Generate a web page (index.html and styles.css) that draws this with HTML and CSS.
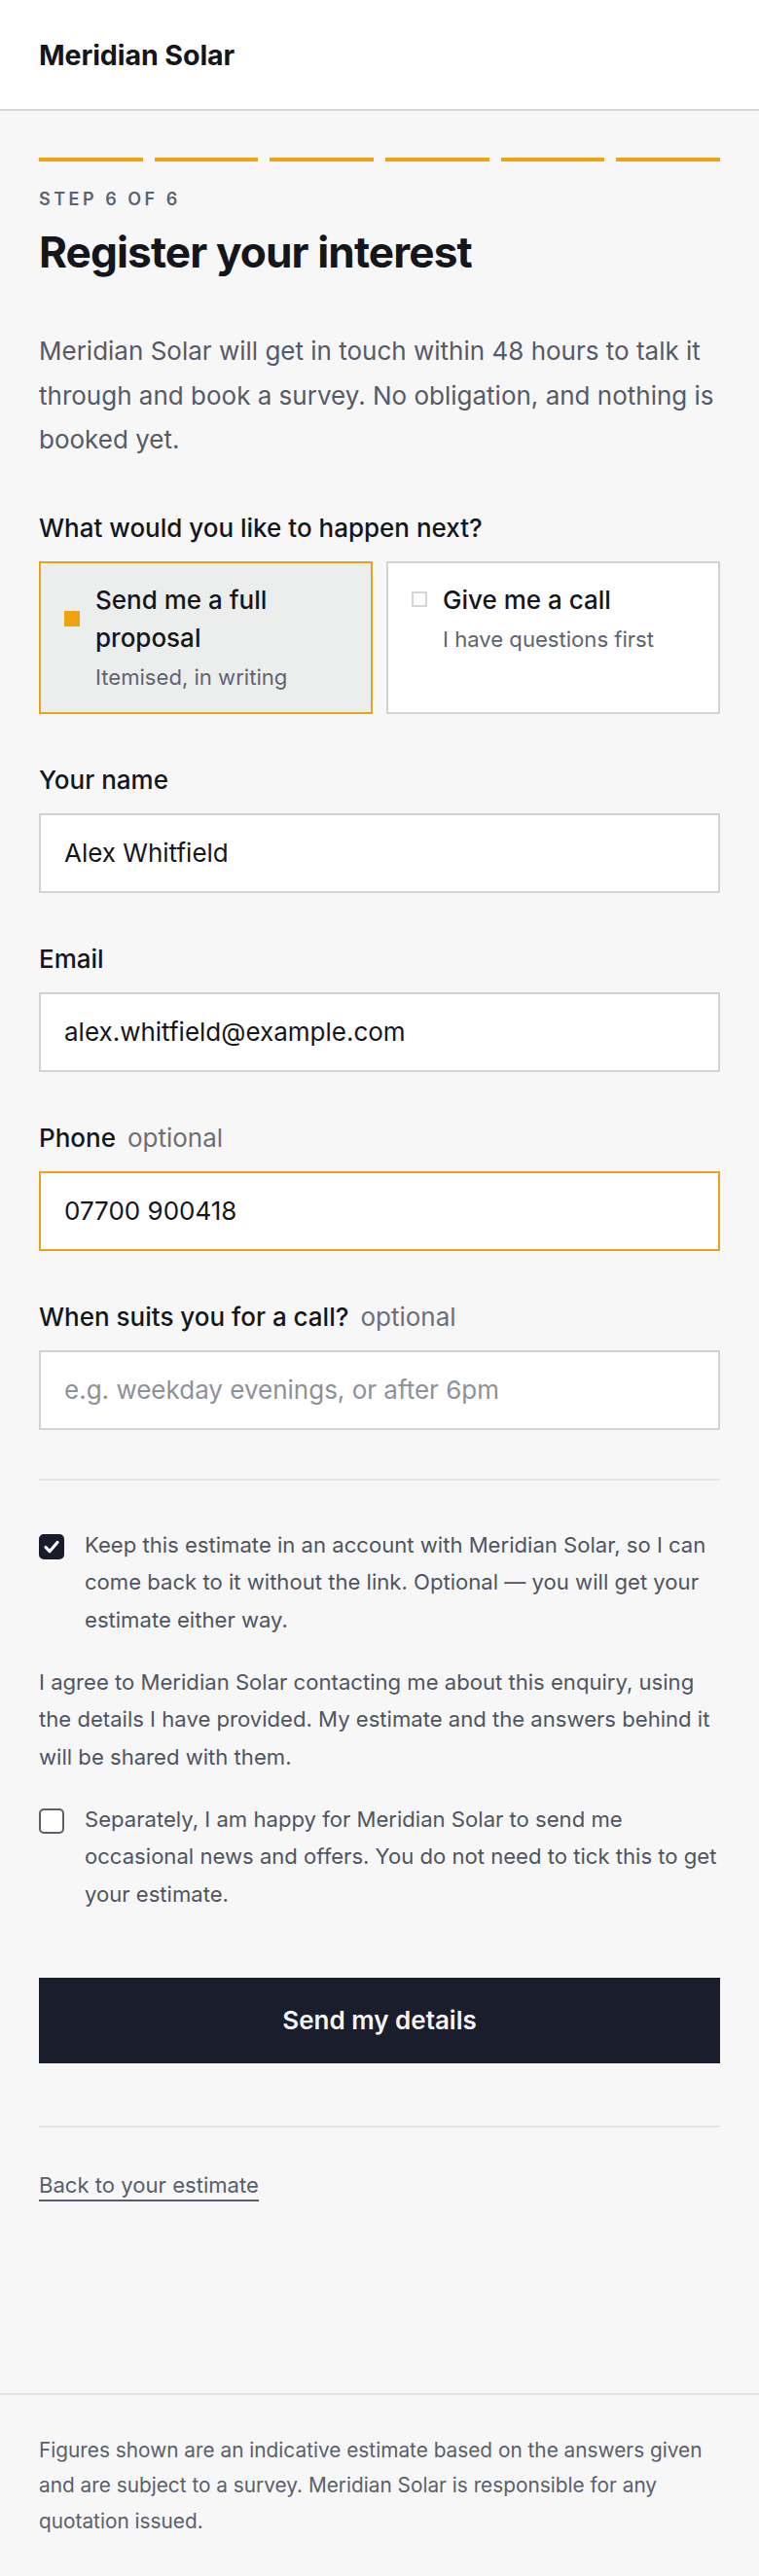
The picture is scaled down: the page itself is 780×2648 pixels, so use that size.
FILE: index.html
```html
<!DOCTYPE html>
<html lang="en">
<head>
<meta charset="utf-8">
<title>Register your interest — Meridian Solar</title>
<link rel="stylesheet" href="styles.css">
</head>
<body>
<header class="site-header">
  <div class="brand">Meridian Solar</div>
</header>
<main class="main">
  <div class="progress">
    <span class="progress-seg"></span>
    <span class="progress-seg"></span>
    <span class="progress-seg"></span>
    <span class="progress-seg"></span>
    <span class="progress-seg"></span>
    <span class="progress-seg"></span>
  </div>
  <p class="step">Step 6 of 6</p>
  <h1 class="title">Register your interest</h1>
  <p class="lead">Meridian Solar will get in touch within 48 hours to talk it through and book a survey. No obligation, and nothing is booked yet.</p>

  <form class="form">
    <div class="fields">
      <div class="group">
        <div class="label">What would you like to happen next?</div>
        <div class="choices">
          <div class="choice is-selected">
            <div class="choice-head"><span class="marker"></span><span class="choice-title">Send me a full proposal</span></div>
            <div class="choice-sub">Itemised, in writing</div>
          </div>
          <div class="choice">
            <div class="choice-head"><span class="marker"></span><span class="choice-title">Give me a call</span></div>
            <div class="choice-sub">I have questions first</div>
          </div>
        </div>
      </div>

      <div class="group">
        <label class="label" for="name">Your name</label>
        <input class="input" id="name" type="text" value="Alex Whitfield">
      </div>

      <div class="group">
        <label class="label" for="email">Email</label>
        <input class="input" id="email" type="email" value="alex.whitfield@example.com">
      </div>

      <div class="group">
        <label class="label" for="phone">Phone<span class="optional">optional</span></label>
        <input class="input is-focused" id="phone" type="tel" value="07700 900418">
      </div>

      <div class="group">
        <label class="label" for="when">When suits you for a call?<span class="optional">optional</span></label>
        <input class="input" id="when" type="text" placeholder="e.g. weekday evenings, or after 6pm">
      </div>
    </div>

    <hr class="divider">

    <div class="consents">
      <div class="check-row">
        <span class="box is-checked">
          <svg width="20" height="20" viewBox="0 0 20 20" aria-hidden="true"><path d="M4 10.5l4 4.2 8-9.2" fill="none" stroke="#ffffff" stroke-width="3.2" stroke-linecap="round" stroke-linejoin="round"/></svg>
        </span>
        <p class="small">Keep this estimate in an account with Meridian Solar, so I can come back to it without the link. Optional — you will get your estimate either way.</p>
      </div>
      <p class="small">I agree to Meridian Solar contacting me about this enquiry, using the details I have provided. My estimate and the answers behind it will be shared with them.</p>
      <div class="check-row">
        <span class="box"></span>
        <p class="small">Separately, I am happy for Meridian Solar to send me occasional news and offers. You do not need to tick this to get your estimate.</p>
      </div>
    </div>

    <button class="submit" type="button">Send my details</button>
  </form>

  <hr class="divider divider-lower">

  <a class="back" href="#">Back to your estimate</a>
</main>
<footer class="footer">
  <p>Figures shown are an indicative estimate based on the answers given and are subject to a survey. Meridian Solar is responsible for any quotation issued.</p>
</footer>
</body>
</html>
```

FILE: styles.css
```css
* { box-sizing: border-box; }

body {
  margin: 0;
  background: #f7f7f8;
  font-family: Inter, "Liberation Sans", sans-serif;
  color: #14161c;
}

.site-header {
  height: 114px;
  background: #ffffff;
  border-bottom: 2px solid #d6d8da;
  display: flex;
  align-items: center;
  padding: 0 40px;
}

.brand {
  font-size: 28.6px;
  font-weight: 700;
  letter-spacing: -0.1px;
}

.main {
  padding: 48px 40px 197px;
}

.progress {
  display: flex;
  gap: 12px;
}

.progress-seg {
  flex: 1;
  height: 4px;
  background: #f0a30f;
}

.step {
  margin: 27px 0 0;
  font-size: 18px;
  line-height: 24px;
  font-weight: 600;
  letter-spacing: 3.5px;
  text-transform: uppercase;
  color: #5e6370;
}

.title {
  margin: 16px 0 0;
  font-size: 44.2px;
  line-height: 52px;
  font-weight: 700;
  letter-spacing: -0.9px;
}

.lead {
  margin: 53px 0 0;
  font-size: 26px;
  line-height: 45.5px;
  color: #555a68;
}

.form {
  margin: 0;
}

.fields {
  margin-top: 50px;
  display: flex;
  flex-direction: column;
  gap: 50px;
}

.label {
  display: block;
  font-size: 26px;
  line-height: 36px;
  font-weight: 500;
  margin-bottom: 16px;
  color: #14161c;
}

.optional {
  font-weight: 400;
  color: #6a6f7b;
  margin-left: 12px;
}

.choices {
  display: grid;
  grid-template-columns: 1fr 1fr;
  gap: 14px;
}

.choice {
  border: 2px solid #d0d2d5;
  background: #ffffff;
  padding: 18px 24px 19px;
}

.choice.is-selected {
  border-color: #eaa21c;
  background: #eceeee;
}

.choice-head {
  display: flex;
  align-items: center;
  gap: 16px;
}

.marker {
  width: 16px;
  height: 16px;
  flex: none;
  border: 2px solid #d3d5d8;
  background: #ffffff;
}

.is-selected .marker {
  border: none;
  background: #f0a30f;
}

.choice-title {
  font-size: 26px;
  line-height: 39px;
  font-weight: 500;
  color: #14161c;
}

.choice-sub {
  margin: 4px 0 0 32px;
  font-size: 22.1px;
  line-height: 34px;
  color: #5e6370;
}

.input {
  display: block;
  width: 100%;
  height: 82px;
  margin: 0;
  border: 2px solid #d0d2d5;
  border-radius: 0;
  background: #ffffff;
  padding: 0 24px;
  font-family: inherit;
  font-size: 26px;
  color: #14161c;
  outline: none;
}

.input::placeholder {
  color: #8d919a;
  opacity: 1;
}

.input.is-focused {
  border-color: #eaa21c;
}

.divider {
  border: 0;
  height: 2px;
  background: #e5e6e8;
  margin: 50px 0 0;
}

.consents {
  margin-top: 47px;
  display: flex;
  flex-direction: column;
  gap: 25px;
}

.check-row {
  display: flex;
  align-items: flex-start;
  gap: 21px;
}

.box {
  width: 26px;
  height: 26px;
  flex: none;
  margin-top: 8px;
  border-radius: 5px;
  border: 2px solid #5d616c;
  background: #ffffff;
  display: flex;
  align-items: center;
  justify-content: center;
}

.box.is-checked {
  background: #181c2b;
  border-color: #181c2b;
}

.small {
  margin: 0;
  font-size: 22.1px;
  line-height: 38.7px;
  color: #4f5461;
}

.submit {
  display: block;
  margin-top: 66px;
  width: 100%;
  height: 88px;
  border: 0;
  border-radius: 0;
  background: #191d2c;
  color: #f4f4f6;
  font-family: inherit;
  font-size: 26px;
  font-weight: 600;
}

.divider-lower {
  margin-top: 64px;
}

.back {
  display: inline-block;
  margin-top: 44px;
  font-size: 22.1px;
  line-height: 30px;
  color: #585d6b;
  text-decoration: none;
  border-bottom: 2px solid #585d6b;
}

.footer {
  border-top: 2px solid #e3e4e6;
  padding: 39px 40px;
}

.footer p {
  margin: 0;
  font-size: 20.8px;
  line-height: 36.4px;
  color: #5a5f6c;
}
```
